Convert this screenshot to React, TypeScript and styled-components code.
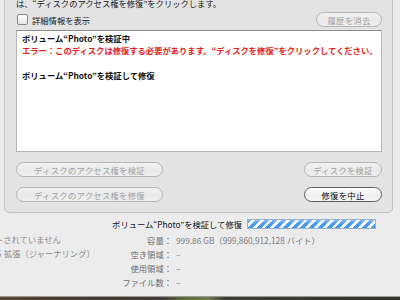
import React from "react";
import styled, { createGlobalStyle } from "styled-components";

const FONT = `"Noto Sans CJK JP", "Noto Sans", sans-serif`;

const GlobalStyle = createGlobalStyle`
  html, body { margin: 0; padding: 0; }
  body { background: #ececec; font-family: ${FONT}; }
`;

const Screen = styled.div`
  width: 400px;
  height: 300px;
  overflow: hidden;
  display: flex;
  flex-direction: column;
  font-size: 8.3px;
  color: #222;
`;

const Window = styled.div`
  flex: 1;
  min-height: 0;
  display: flex;
  flex-direction: column;
  background: #ececec;
  border-bottom: 1px solid #9a9a9a;
`;

const Desktop = styled.div`
  height: 3px;
  background: linear-gradient(
    90deg,
    #5b4630 0%,
    #4e3c2c 12%,
    #3e3a34 40%,
    #5f6a3c 46%,
    #6f7a48 52%,
    #3d3d38 56%,
    #35352f 100%
  );
`;

const Panel = styled.div`
  margin: -10px 7px 0 4px;
  padding: 6px 10px 10px 11px;
  background: #e3e3e3;
  border: 1px solid #c2c2c2;
  border-radius: 5px;
  display: flex;
  flex-direction: column;
`;

const TopText = styled.div`
  line-height: 12px;
  height: 12px;
  white-space: nowrap;
  color: #222;
`;

const OptionsRow = styled.div`
  display: flex;
  align-items: center;
  height: 15px;
  margin: 3px 0 3px;
`;

const Check = styled.span`
  width: 9px;
  height: 9px;
  margin-left: 1px;
  border: 1px solid #8a8a8a;
  border-radius: 2px;
  background: linear-gradient(#ffffff, #e6e6e6);
  box-sizing: content-box;
`;

const CheckLabel = styled.span`
  margin-left: 4px;
  color: #222;
  white-space: nowrap;
`;

const Spacer = styled.div`
  flex: 1;
`;

const PillButton = styled.div<{ $enabled?: boolean; $width: number }>`
  width: ${(p) => p.$width}px;
  height: 15px;
  box-sizing: border-box;
  border-radius: 8px;
  border: 1px solid ${(p) => (p.$enabled ? "#5e5e5e" : "#b5b5b5")};
  background: ${(p) =>
    p.$enabled
      ? "linear-gradient(#ffffff, #eeeeee 55%, #f6f6f6)"
      : "linear-gradient(#f2f2f2, #e9e9e9 55%, #efefef)"};
  color: ${(p) => (p.$enabled ? "#111" : "#a3a3a3")};
  display: flex;
  align-items: center;
  justify-content: center;
  white-space: nowrap;
  letter-spacing: 0.3px;
`;

const LogBox = styled.div`
  height: 122px;
  box-sizing: border-box;
  background: #ffffff;
  border: 1px solid #b4b4b4;
  border-top-color: #8e8e8e;
  padding: 1px 5px;
  line-height: 12.3px;
  font-weight: bold;
`;

const LogLine = styled.div<{ $error?: boolean }>`
  height: 12.3px;
  white-space: nowrap;
  color: ${(p) => (p.$error ? "#e2231a" : "#111")};
`;

const ButtonGrid = styled.div`
  margin-top: 10px;
  display: grid;
  grid-template-columns: auto 1fr auto;
  row-gap: 10px;
`;

const StatusRow = styled.div`
  margin-top: 5px;
  height: 11px;
  display: flex;
  align-items: center;
  justify-content: flex-end;
  padding-right: 24px;
  gap: 5px;
`;

const StatusText = styled.span`
  color: #111;
  white-space: nowrap;
`;

const Barber = styled.div`
  width: 129px;
  height: 10px;
  box-sizing: border-box;
  border: 1px solid #9ab2cc;
  background:
    linear-gradient(rgba(255, 255, 255, 0.3), rgba(255, 255, 255, 0) 50%, rgba(0, 40, 120, 0.06)),
    repeating-linear-gradient(
      -45deg,
      #4a9cf0 0px,
      #4a9cf0 3.5px,
      #ffffff 3.5px,
      #ffffff 6.2px
    );
`;

const InfoGrid = styled.div`
  margin-top: 4px;
  margin-left: -30px;
  display: grid;
  grid-template-columns: 120px 82px 1fr;
  grid-auto-rows: 14px;
  line-height: 14px;
  white-space: nowrap;
`;

const InfoValueLeft = styled.div`
  color: #8a8a8a;
  font-family: "DejaVu Sans", "Noto Sans CJK JP", sans-serif;
`;

const InfoLabel = styled.div`
  text-align: right;
  color: #6f6f6f;
`;

const InfoValue = styled.div`
  color: #7a7a7a;
  padding-left: 4px;
`;

const leftRows = ["マウントされていません", "Mac OS 拡張（ジャーナリング）", "", ""];
const rightRows: [string, string][] = [
  ["容量：", "999.86 GB（999,860,912,128 バイト）"],
  ["空き領域：", "–"],
  ["使用領域：", "–"],
  ["ファイル数：", "–"],
];

export default function App() {
  return (
    <>
      <GlobalStyle />
      <Screen>
        <Window>
          <Panel>
            <TopText>は、“ディスクのアクセス権を修復”をクリックします。</TopText>
            <OptionsRow>
              <Check />
              <CheckLabel>詳細情報を表示</CheckLabel>
              <Spacer />
              <PillButton $width={66}>履歴を消去</PillButton>
            </OptionsRow>
            <LogBox>
              <LogLine>ボリューム“Photo”を検証中</LogLine>
              <LogLine $error>
                エラー：このディスクは修復する必要があります。“ディスクを修復”をクリックしてください。
              </LogLine>
              <LogLine />
              <LogLine>ボリューム“Photo”を検証して修復</LogLine>
            </LogBox>
            <ButtonGrid>
              <PillButton $width={147}>ディスクのアクセス権を検証</PillButton>
              <Spacer />
              <PillButton $width={78}>ディスクを検証</PillButton>
              <PillButton $width={147}>ディスクのアクセス権を修復</PillButton>
              <Spacer />
              <PillButton $width={78} $enabled>
                修復を中止
              </PillButton>
            </ButtonGrid>
          </Panel>
          <StatusRow>
            <StatusText>ボリューム“Photo”を検証して修復</StatusText>
            <Barber />
          </StatusRow>
          <InfoGrid>
            {rightRows.map(([label, value], i) => (
              <React.Fragment key={label}>
                <InfoValueLeft>{leftRows[i]}</InfoValueLeft>
                <InfoLabel>{label}</InfoLabel>
                <InfoValue>{value}</InfoValue>
              </React.Fragment>
            ))}
          </InfoGrid>
        </Window>
        <Desktop />
      </Screen>
    </>
  );
}
